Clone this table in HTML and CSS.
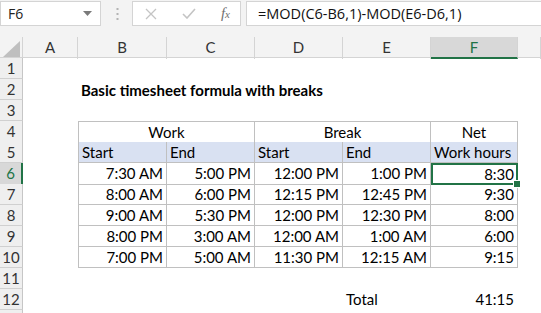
FILE: index.html
```html
<!DOCTYPE html>
<html lang="en">
<head>
    <meta charset="UTF-8">
    <title>Basic timesheet formula with breaks</title>
    <link rel="stylesheet" href="styles.css">
</head>
<body>
    <div class="toolbar">
        <div class="name-box">
            <span>F6</span>
            <svg class="caret" width="9" height="5" viewBox="0 0 9 5"><path d="M0 0h9L4.5 5z" fill="#7a7a7a"/></svg>
        </div>
        <svg class="grip" width="3" height="12" viewBox="0 0 3 12">
            <rect x="0.5" y="0" width="2" height="2" fill="#b4b4b4"/>
            <rect x="0.5" y="5" width="2" height="2" fill="#b4b4b4"/>
            <rect x="0.5" y="10" width="2" height="2" fill="#b4b4b4"/>
        </svg>
        <div class="func-box">
            <svg width="12" height="12" viewBox="0 0 12 12"><path d="M1 1l10 10M11 1L1 11" stroke="#c4c4c4" stroke-width="1.3" fill="none"/></svg>
            <svg width="14" height="11" viewBox="0 0 14 11"><path d="M1 6l4 4 8-9" stroke="#c4c4c4" stroke-width="1.6" fill="none"/></svg>
            <span class="fx">f<small>x</small></span>
        </div>
        <div class="formula">=MOD(C6-B6,1)-MOD(E6-D6,1)</div>
    </div>

    <div class="sheet">
        <div class="row col-heads">
            <div class="corner"><svg width="18" height="16" viewBox="0 0 18 16"><path d="M18 0V16H1z" fill="#bfbfbf"/></svg></div>
            <div>A</div><div>B</div><div>C</div><div>D</div><div>E</div><div class="active">F</div><div></div>
        </div>

        <div class="row"><div class="rh">1</div></div>
        <div class="row"><div class="rh">2</div><div></div><div class="title">Basic timesheet formula with breaks</div></div>
        <div class="row"><div class="rh">3</div></div>
        <div class="row"><div class="rh">4</div><div></div>
            <div class="c grp first top wide">Work</div>
            <div class="c grp top wide">Break</div>
            <div class="c grp top">Net</div>
        </div>
        <div class="row"><div class="rh">5</div><div></div>
            <div class="c hd first">Start</div>
            <div class="c hd">End</div>
            <div class="c hd">Start</div>
            <div class="c hd">End</div>
            <div class="c hd">Work hours</div>
        </div>
        <div class="row"><div class="rh active">6</div><div></div>
            <div class="c first">7:30 AM</div><div class="c">5:00 PM</div><div class="c">12:00 PM</div><div class="c">1:00 PM</div><div class="c selected">8:30</div>
        </div>
        <div class="row"><div class="rh">7</div><div></div>
            <div class="c first">8:00 AM</div><div class="c">6:00 PM</div><div class="c">12:15 PM</div><div class="c">12:45 PM</div><div class="c">9:30</div>
        </div>
        <div class="row"><div class="rh">8</div><div></div>
            <div class="c first">9:00 AM</div><div class="c">5:30 PM</div><div class="c">12:00 PM</div><div class="c">12:30 PM</div><div class="c">8:00</div>
        </div>
        <div class="row"><div class="rh">9</div><div></div>
            <div class="c first">8:00 PM</div><div class="c">3:00 AM</div><div class="c">12:00 AM</div><div class="c">1:00 AM</div><div class="c">6:00</div>
        </div>
        <div class="row"><div class="rh">10</div><div></div>
            <div class="c first">7:00 PM</div><div class="c">5:00 AM</div><div class="c">11:30 PM</div><div class="c">12:15 AM</div><div class="c">9:15</div>
        </div>
        <div class="row"><div class="rh">11</div></div>
        <div class="row"><div class="rh">12</div><div></div><div></div><div></div><div></div>
            <div class="total-label">Total</div><div class="num">41:15</div>
        </div>
        <div class="row"><div class="rh"></div></div>
    </div>
</body>
</html>
```

FILE: styles.css
```css
/* Page */
body {
    margin: 0;
    background: #fff;
    font-family: Lato, "Liberation Sans", sans-serif;
    color: #000;
    overflow: hidden;
}

/* Formula bar */
.toolbar {
    height: 37px;
    background: #f3f3f3;
    display: flex;
    align-items: flex-start;
    padding-top: 1px;
    box-sizing: border-box;
}

.name-box, .func-box, .formula {
    height: 25px;
    background: #fff;
    border: 1px solid #d4d4d4;
    box-sizing: border-box;
    display: flex;
    align-items: center;
}

.name-box {
    width: 101px;
    padding: 0 8px 0 7px;
    justify-content: space-between;
    font-family: "Open Sans", sans-serif;
    font-size: 14px;
    color: #222;
}

.grip {
    margin: 7px 13px 0 15px;
}

.func-box {
    width: 109px;
    padding: 0 10px 0 12px;
    justify-content: space-between;
}

.fx {
    font-family: "Liberation Serif", serif;
    font-style: italic;
    font-size: 15px;
    color: #707070;
}

.fx small {
    font-size: 11px;
}

.formula {
    flex: 1;
    margin-left: 5px;
    padding-left: 11px;
    font-family: "Open Sans", sans-serif;
    font-size: 14.5px;
    color: #111;
    border-right: none;
}

/* Grid */
.row {
    display: grid;
    grid-template-columns: 23px 55px 89px 88px 88px 88px 87px 1fr;
    height: 21px;
    font-size: 15px;
    line-height: 20px;
}

.col-heads {
    height: 20px;
    background: #f3f3f3;
    border-bottom: 1px solid #d4d4d4;
    color: #333;
}

.col-heads div {
    text-align: center;
    border-right: 1px solid #d4d4d4;
}

.col-heads .corner {
    display: flex;
    justify-content: flex-end;
    align-items: flex-end;
    padding: 0 2px 2px 0;
}

.col-heads .active {
    background: #d8d8d8;
    color: #217346;
    border-bottom: 2px solid #217346;
}

.rh {
    background: #efefef;
    border-right: 1px solid #c6c6c6;
    border-bottom: 1px solid #d0d0d0;
    text-align: center;
    color: #333;
    box-sizing: border-box;
}

.rh.active {
    background: #d8d8d8;
    color: #217346;
    border-right: 2px solid #217346;
}

.title {
    grid-column: span 4;
    font-weight: bold;
    padding-left: 3px;
    white-space: nowrap;
    padding-top: 1px;
}

/* Table cells */
.c {
    border-right: 1px solid #c0c0c0;
    border-bottom: 1px solid #c0c0c0;
    text-align: right;
    padding: 0 3px;
    box-sizing: border-box;
    white-space: nowrap;
}

.c.first {
    border-left: 1px solid #c0c0c0;
}

.c.top {
    border-top: 1px solid #c0c0c0;
}

.c.wide {
    grid-column: span 2;
}

.c.grp {
    text-align: center;
}

.c.hd {
    text-align: left;
    background: #d9e1f2;
}

.c.selected {
    position: relative;
    border: 2px solid #217346;
    line-height: 18px;
    padding-right: 2px;
}

.c.selected::after {
    content: "";
    position: absolute;
    right: -5px;
    bottom: -5px;
    width: 6px;
    height: 6px;
    background: #217346;
    border: 1px solid #fff;
}

.total-label {
    padding-left: 3px;
}

.num {
    text-align: right;
    padding-right: 4px;
}
```
